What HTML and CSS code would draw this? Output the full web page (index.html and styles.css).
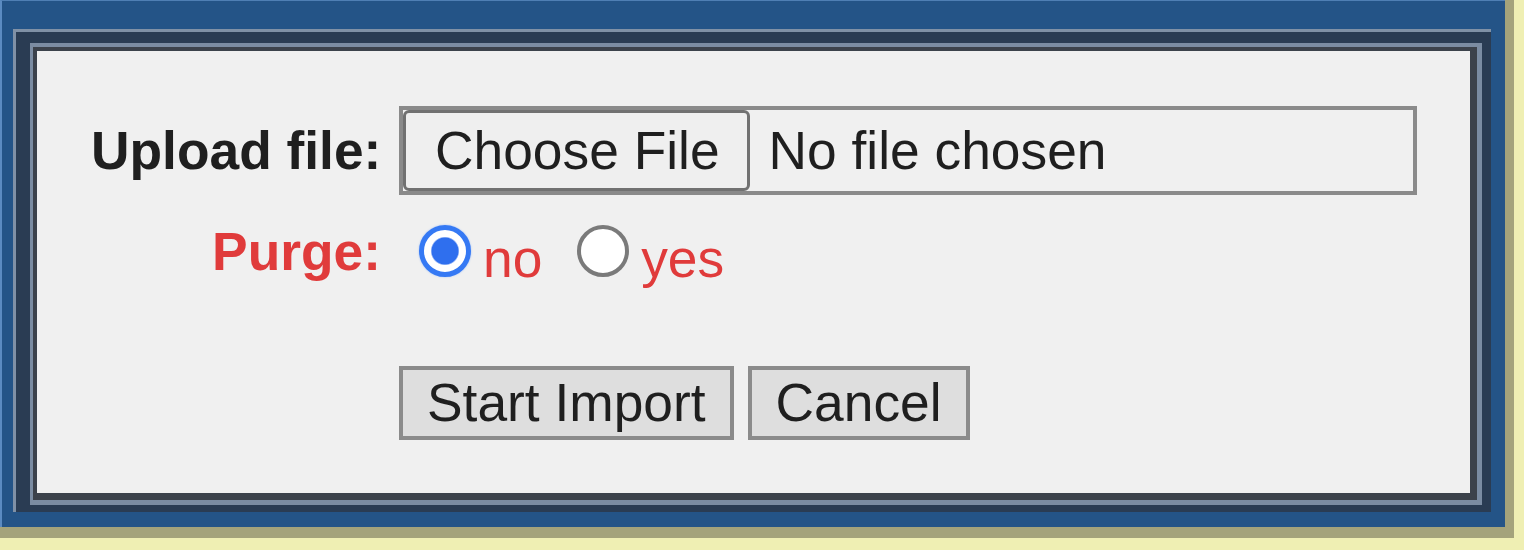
FILE: index.html
```html
<!DOCTYPE html>
<html>
<head>
<meta charset="utf-8">
<link rel="stylesheet" href="styles.css">
</head>
<body>
<div class="shadow">
  <div class="outer">
    <div class="frame1">
      <div class="frame2">
        <div class="frame3">
          <div class="panel">
            <div class="form">
              <div class="label">Upload file:</div>
              <div class="file">
                <span class="file-btn">Choose File</span>
                <span class="file-name">No file chosen</span>
              </div>
              <div class="label red">Purge:</div>
              <div class="radios"><span class="radio on"></span>no <span class="radio"></span>yes</div>
              <div class="actions">
                <button class="btn" type="button">Start Import</button>
                <button class="btn" type="button">Cancel</button>
              </div>
            </div>
          </div>
        </div>
      </div>
    </div>
  </div>
</div>
</body>
</html>
```

FILE: styles.css
```css
html, body {
  margin: 0;
  padding: 0;
}
body {
  background: #efefb3;
  width: 1524px;
  height: 550px;
  overflow: hidden;
}
.shadow {
  width: 1514px;
  height: 538px;
  box-sizing: border-box;
  padding: 0 9px 11px 0;
  background: #a4a37b;
}
.outer {
  height: 527px;
  box-sizing: border-box;
  background: #245487;
  border-left: 2px solid #5b8bc1;
  border-top: 1px solid #4f7fb4;
  padding: 28px 14px 15px 11px;
}
.frame1 {
  background: #2a3c53;
  border-top: 3px solid #8091a6;
  border-left: 3px solid #8091a6;
  padding: 11px 9px 7px 14px;
}
.frame2 {
  border-style: solid;
  border-color: #7b8ca2;
  border-width: 4px 5px 5px 3px;
}
.frame3 {
  border-style: solid;
  border-color: #3c424b;
  border-width: 4px 7px 7px 4px;
}
.panel {
  background: #f0f0f0;
  height: 442px;
  box-sizing: border-box;
  padding: 55px 53px 0 54px;
  font-family: "Liberation Sans", Arial, sans-serif;
  font-size: 53.33px;
  color: #1f1f1f;
}
.form {
  display: grid;
  grid-template-columns: 290px 1fr;
  column-gap: 18px;
  row-gap: 18px;
  align-items: center;
}
.label {
  font-weight: bold;
  text-align: right;
  white-space: nowrap;
}
.label.red {
  color: #e03b3b;
}
.file {
  height: 89px;
  box-sizing: border-box;
  border: 4px solid #8a8a8a;
  display: flex;
  align-items: stretch;
}
.file-btn {
  display: flex;
  align-items: center;
  border: 3px solid #717171;
  border-radius: 6px;
  background: #efefef;
  padding: 0 27px 0 29px;
  margin-right: 19px;
}
.file-name {
  display: flex;
  align-items: center;
}
.radios {
  color: #e03b3b;
}
.radio {
  display: inline-block;
  width: 52px;
  height: 52px;
  box-sizing: border-box;
  border-radius: 50%;
  margin: 12px 12px 0 20px;
  background: #ffffff;
  border: 4px solid #7a7a7a;
}
.radio.on {
  border: 5px solid #3579f4;
  background: radial-gradient(circle, #2f6fee 0 13px, #ffffff 14.5px);
  box-shadow: 0 0 2px #9dbdf8;
}
.actions {
  grid-column: 2;
  margin-top: 59px;
  display: flex;
  gap: 14px;
}
.btn {
  height: 74px;
  box-sizing: border-box;
  border: 4px solid #8b8b8b;
  border-radius: 0;
  background: #dedede;
  padding: 0 24px;
  font-family: "Liberation Sans", Arial, sans-serif;
  font-size: 53.33px;
  color: #1f1f1f;
  line-height: 1;
}
```
